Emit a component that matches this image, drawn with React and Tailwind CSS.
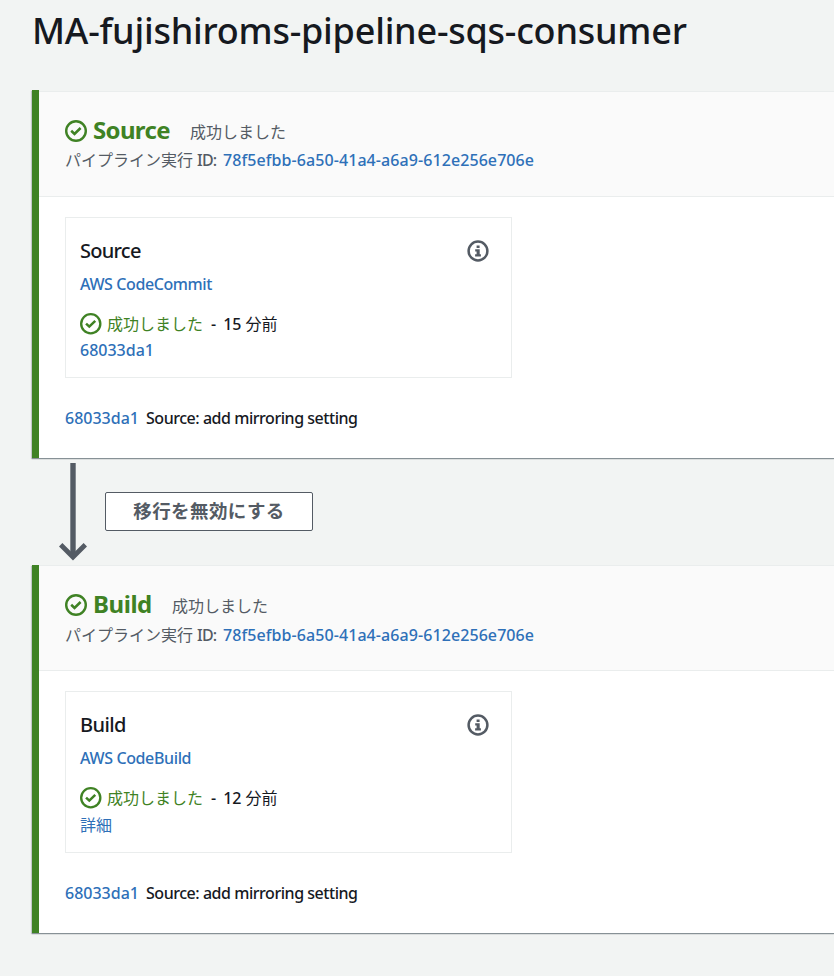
const stages = [
  {
    name: "Source",
    nameClass: "w-[97px] tracking-[-0.65px]",
    titleClass: "tracking-[-0.75px]",
    provider: "AWS CodeCommit",
    providerClass: "tracking-[-0.4px]",
    time: "15",
    detail: "68033da1",
    detailClass: "mt-0.5",
    bodyClass: "mt-px",
    idClass: "mt-[3px]",
    cardClass: "h-[161px]",
  },
  {
    name: "Build",
    nameClass: "w-[79px] tracking-[-0.45px]",
    titleClass: "tracking-[-0.6px]",
    provider: "AWS CodeBuild",
    providerClass: "tracking-[-0.37px]",
    time: "12",
    detail: "詳細",
    detailClass: "mt-[3px] font-normal",
    bodyClass: "",
    idClass: "mt-1",
    cardClass: "h-[162px]",
  },
];

function CheckIcon({ className }) {
  return (
    <svg viewBox="0 0 22 22" className={`shrink-0 text-[#3f8224] ${className}`} fill="none" stroke="currentColor">
      <circle cx="11" cy="11" r="9.8" strokeWidth="2.4" />
      <path d="M6.2 10.8L9.5 13.9L15.6 8" strokeWidth="2.6" />
    </svg>
  );
}

function InfoIcon() {
  return (
    <svg viewBox="0 0 22 22" className="h-[22px] w-[22px] text-[#545b64]" fill="none" stroke="currentColor">
      <circle cx="11" cy="11" r="9.4" strokeWidth="2.5" />
      <path d="M9.6 5.5h3v2.6h-3z M8.2 9.3h4.5v5h1.2v2.1H8.1v-2.1h1.5v-2.9H8.2z" fill="currentColor" stroke="none" />
    </svg>
  );
}

function Stage({ stage }) {
  return (
    <section className="flex h-[368px] shadow-[0_1px_1px_0_#879196,-1px_1px_1px_0_rgba(0,28,36,0.15)]">
      <div className="w-[7px] shrink-0 bg-[#3f8224]" />
      <div className={`min-w-0 grow bg-white ${stage.bodyClass}`}>
        <header className="h-[106px] border-y border-[#eaeded] bg-[#fafafa] pt-[23px] pl-[26px]">
          <div className="flex h-[30px] items-center">
            <CheckIcon className="mt-px h-[22px] w-[22px]" />
            <h2 className={`ml-1.5 text-2xl leading-[30px] font-bold text-[#3f8224] ${stage.nameClass}`}>{stage.name}</h2>
            <span className="pt-1 text-base leading-6 text-[#545b64]">成功しました</span>
          </div>
          <div className={`flex text-base leading-6 text-[#545b64] ${stage.idClass}`}>
            <span>パイプライン実行</span>
            <span className="ml-1 w-[26px] font-medium tracking-[-0.8px]">ID:</span>
            <a className="font-medium tracking-[0.08px] text-[#2e70b8]">78f5efbb-6a50-41a4-a6a9-612e256e706e</a>
          </div>
        </header>
        <div className="pt-5 pl-[26px] text-base leading-6 font-medium">
          <article className={`w-[447px] border border-[#eaeded] pt-[19px] pr-[22.5px] pl-[14px] ${stage.cardClass}`}>
            <div className="flex h-7 items-center justify-between">
              <h3 className={`text-xl leading-7 ${stage.titleClass}`}>{stage.name}</h3>
              <InfoIcon />
            </div>
            <a className={`mt-[7px] block text-[#2e70b8] ${stage.providerClass}`}>{stage.provider}</a>
            <div className="mt-4 flex items-center">
              <CheckIcon className="h-[21.5px] w-[21.5px]" />
              <span className="ml-[5.5px] font-normal text-[#3f8224]">成功しました</span>
              <span className="ml-2">-</span>
              <span className="ml-[7px]">{stage.time}</span>
              <span className="ml-1 font-normal">分前</span>
            </div>
            <a className={`block text-[#2e70b8] ${stage.detailClass}`}>{stage.detail}</a>
          </article>
          <div className="mt-7 flex">
            <a className="w-[81px] text-[#2e70b8]">68033da1</a>
            <span className="tracking-[-0.46px]">Source: add mirroring setting</span>
          </div>
        </div>
      </div>
    </section>
  );
}

export default function App() {
  return (
    <main className="h-[976px] w-[834px] overflow-hidden bg-[#f2f4f3] pl-8 font-['Noto_Sans','Noto_Sans_CJK_JP',sans-serif] text-[#16191f]">
      <h1 className="h-[90px] pt-2 text-4xl leading-[46px] font-medium tracking-[-0.23px] whitespace-nowrap">
        MA-fujishiroms-pipeline-sqs-consumer
      </h1>
      <Stage stage={stages[0]} />
      <div className="flex h-[107px] pl-[27px]">
        <svg viewBox="0 0 28 98" className="mt-[5px] h-[98px] w-7" fill="none" stroke="#545b64">
          <path d="M14 0V94" strokeWidth="5.4" />
          <path d="M1.7 81.8L14 94L26.3 81.8" strokeWidth="4.8" />
        </svg>
        <button className="mt-[34px] ml-[18px] h-[39px] w-[208px] rounded-xs border border-[#545b64] bg-white pb-px text-[18.5px] leading-none font-bold tracking-[0.4px] text-[#545b64]">
          移行を無効にする
        </button>
      </div>
      <Stage stage={stages[1]} />
    </main>
  );
}
